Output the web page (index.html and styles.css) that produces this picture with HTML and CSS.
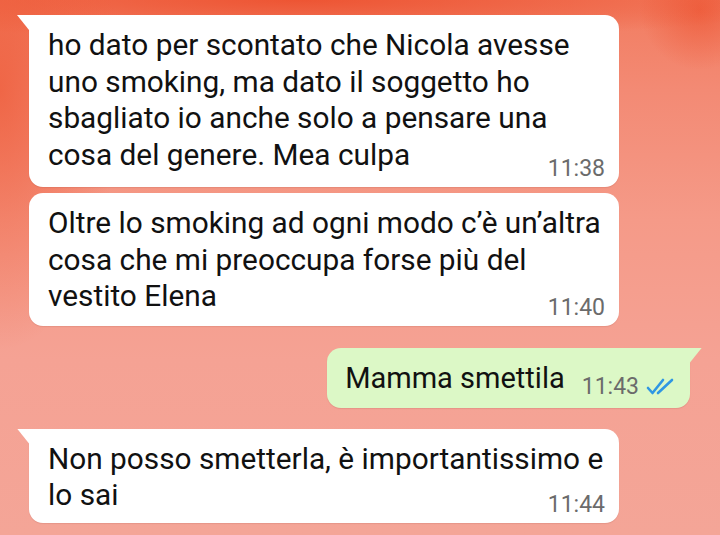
FILE: index.html
```html
<!DOCTYPE html>
<html lang="it">
<head>
<meta charset="utf-8">
<link rel="stylesheet" href="styles.css">
</head>
<body>
<div class="chat">
  <div class="bubble in tail b1">
    <div class="text">ho dato per scontato che Nicola avesse<br>uno smoking, ma dato il soggetto ho<br>sbagliato io anche solo a pensare una<br>cosa del genere. Mea culpa</div>
    <div class="meta"><span class="time">11:38</span></div>
  </div>
  <div class="bubble in b2">
    <div class="text">Oltre lo smoking ad ogni modo c’è un’altra<br>cosa che mi preoccupa forse più del<br>vestito Elena</div>
    <div class="meta"><span class="time">11:40</span></div>
  </div>
  <div class="bubble out tail b3">
    <span class="text">Mamma smettila</span>
    <span class="meta-inline"><span class="time">11:43</span>
      <svg class="ticks" width="30" height="20" viewBox="0 0 30 20"><path d="M2 11 L6.5 16 L17 3" fill="none" stroke="#2f97e3" stroke-width="2.6" stroke-linecap="round" stroke-linejoin="round"/><path d="M12 16 L26 3" fill="none" stroke="#2f97e3" stroke-width="2.6" stroke-linecap="round"/></svg>
    </span>
  </div>
  <div class="bubble in tail b4">
    <div class="text">Non posso smetterla, è importantissimo e<br>lo sai</div>
    <div class="meta"><span class="time">11:44</span></div>
  </div>
</div>
</body>
</html>
```
FILE: styles.css
```css
html, body {
  margin: 0;
  padding: 0;
}
body {
  width: 720px;
  height: 535px;
  overflow: hidden;
  font-family: Roboto, "Noto Sans", sans-serif;
  background:
    radial-gradient(ellipse 120px 260px at 0px 90px, rgba(238, 90, 55, 0.75), rgba(238, 90, 55, 0) 100%),
    radial-gradient(ellipse 520px 40px at 300px 0px, rgba(236, 75, 40, 0.8), rgba(236, 75, 40, 0) 100%),
    radial-gradient(ellipse 60px 60px at 700px 10px, rgba(236, 80, 45, 0.6), rgba(236, 80, 45, 0) 100%),
    linear-gradient(180deg, #f27c60 0px, #f38a74 90px, #f59a88 220px, #f5a294 360px, #f4a597 535px);
}
.chat {
  display: flex;
  flex-direction: column;
  padding: 15px 0 0 29px;
}
.bubble {
  position: relative;
  box-sizing: border-box;
  border-radius: 14px;
  box-shadow: 0 1px 1px rgba(120, 40, 30, 0.12);
}
.bubble.in {
  background: #ffffff;
  width: 590px;
  padding: 12px 14px 6px 19px;
}
.bubble.in.tail {
  border-top-left-radius: 0;
}
.bubble.in.tail::before {
  content: "";
  position: absolute;
  left: -12px;
  top: 0;
  width: 12px;
  height: 15px;
  background: #ffffff;
  clip-path: polygon(0 0, 100% 0, 100% 100%);
}
.text {
  font-size: 29.8px;
  line-height: 36.5px;
  color: #111111;
}
.meta {
  display: flex;
  justify-content: flex-end;
}
.time {
  font-size: 23px;
  line-height: 24px;
  color: #6b6b6b;
}
.b1 .meta {
  margin-top: -16px;
}
.b2 {
  margin-top: 6px;
  padding-top: 11px;
}
.b2 .meta {
  margin-top: -19px;
}
.b3 {
  margin-top: 22px;
}
.bubble.out {
  align-self: flex-end;
  margin-right: 30px;
  background: #dcf8c6;
  display: flex;
  align-items: center;
  gap: 17px;
  height: 60px;
  padding: 0 14px 0 18px;
}
.bubble.out.tail {
  border-top-right-radius: 0;
}
.bubble.out.tail::after {
  content: "";
  position: absolute;
  right: -12px;
  top: 0;
  width: 12px;
  height: 15px;
  background: #dcf8c6;
  clip-path: polygon(0 0, 100% 0, 0 100%);
}
.bubble.out .text {
  font-size: 29px;
  line-height: 36px;
}
.meta-inline {
  display: flex;
  align-items: center;
  gap: 7px;
  margin-top: 18px;
}
.b4 {
  margin-top: 21px;
  padding-top: 13px;
}
.b4 .meta {
  margin-top: -21px;
}
```
